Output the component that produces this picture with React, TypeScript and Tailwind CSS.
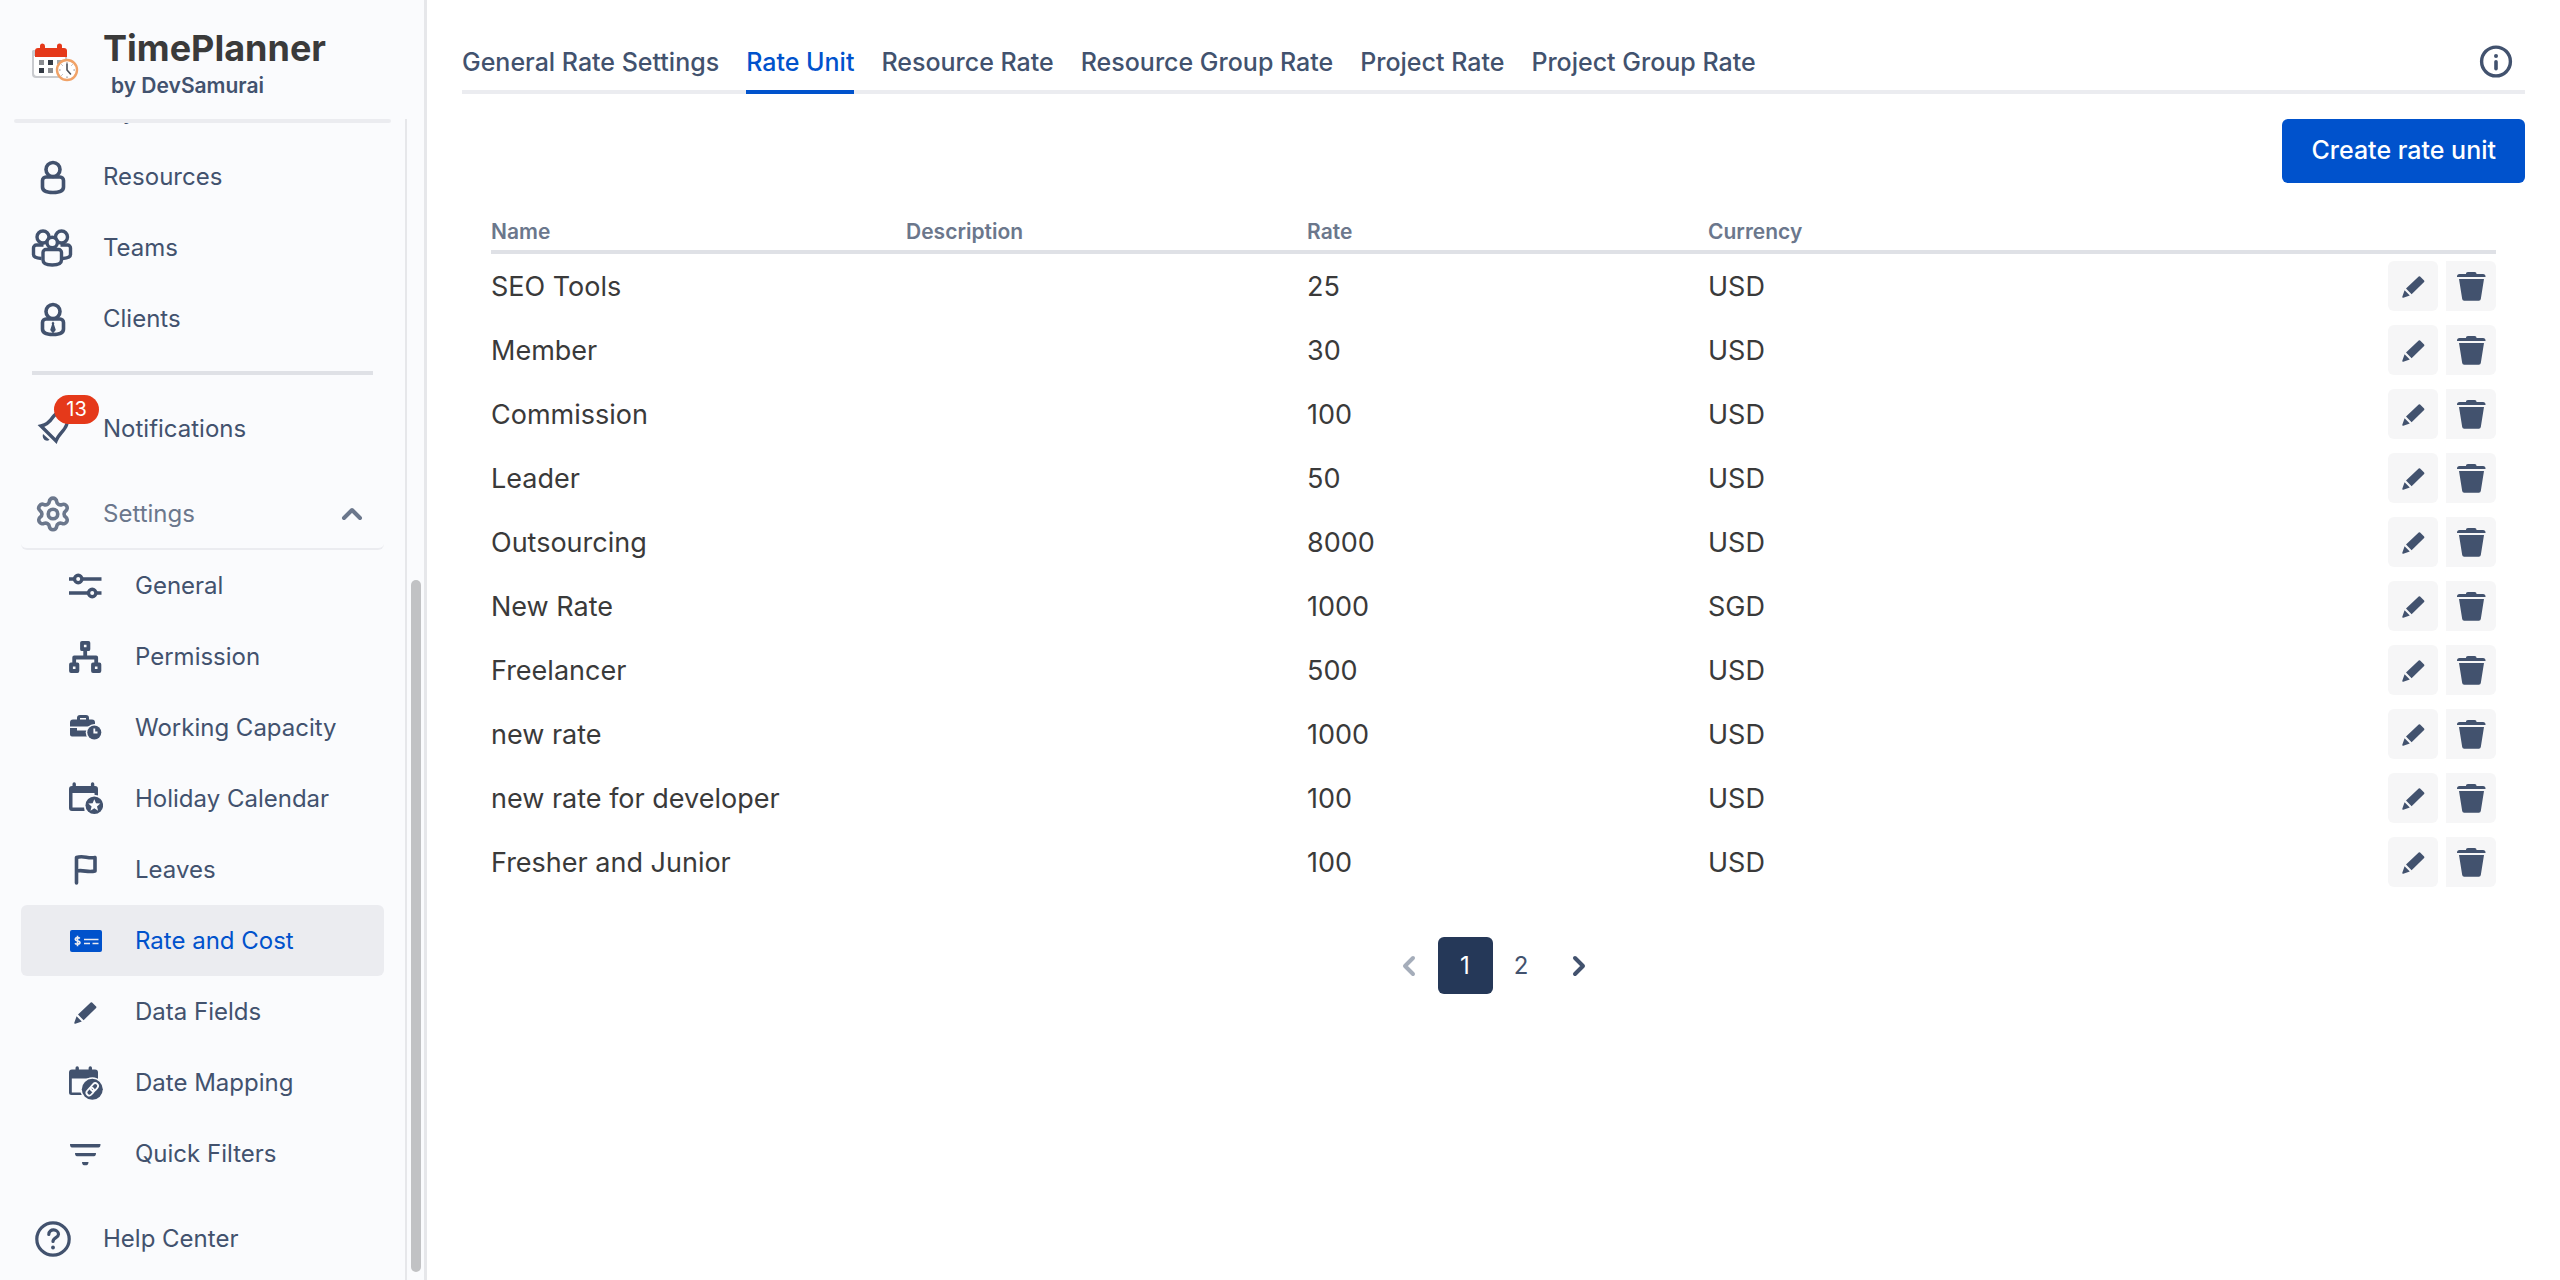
import type { ReactNode } from "react";
import { Settings } from "lucide-react";

const ROWS = [
  { name: "SEO Tools", rate: "25", currency: "USD" },
  { name: "Member", rate: "30", currency: "USD" },
  { name: "Commission", rate: "100", currency: "USD" },
  { name: "Leader", rate: "50", currency: "USD" },
  { name: "Outsourcing", rate: "8000", currency: "USD" },
  { name: "New Rate", rate: "1000", currency: "SGD" },
  { name: "Freelancer", rate: "500", currency: "USD" },
  { name: "new rate", rate: "1000", currency: "USD" },
  { name: "new rate for developer", rate: "100", currency: "USD" },
  { name: "Fresher and Junior", rate: "100", currency: "USD" },
];

const TABS = [
  "General Rate Settings",
  "Rate Unit",
  "Resource Rate",
  "Resource Group Rate",
  "Project Rate",
  "Project Group Rate",
];

function LogoIcon() {
  return (
    <svg viewBox="0 0 50 42" className="w-[50px] h-[42px]">
      <path d="M2 8h34v24a4 4 0 0 1-4 4H5a4 4 0 0 1-4-4V9z" fill="#c9cbcf" />
      <path d="M3 14h31v17a3 3 0 0 1-3 3H6a3 3 0 0 1-3-3z" fill="#fff" />
      <path d="M4 15V9a3 3 0 0 1 3-3h2V4a2.5 2.5 0 0 1 5 0v2h12V4a2.5 2.5 0 0 1 5 0v2h2a3 3 0 0 1 3 3v6z" fill="#e5391a" />
      <path d="M8 18h5v5H8zM17 26h5v5h-5z" fill="#8a8c90" />
      <path d="M17 18h5v5h-5zM8 26h5v5H8z" fill="#333a44" />
      <path d="M26 18h6v4h-6z" fill="#a5a7aa" />
      <circle cx="36" cy="28" r="10" fill="#fff" stroke="#f0a267" strokeWidth="2.4" />
      <path d="M36 20v1.6M36 34.4V36M28 28h1.6M42.4 28H44M30.5 22.5l1 1M41.5 22.5l-1 1M30.5 33.5l1-1" stroke="#8a8c90" strokeWidth="1" />
      <path d="M36 22v6l3.5 4" fill="none" stroke="#4a4f57" strokeWidth="1.6" strokeLinecap="round" />
    </svg>
  );
}

function PersonIcon({ tie }: { tie?: boolean }) {
  return (
    <svg viewBox="0 0 40 40" className="w-10 h-10" fill="none" stroke="currentColor" strokeWidth="3.6">
      <circle cx="21" cy="12.5" r="7" />
      <path d="M14 20h14a3.5 3.5 0 0 1 3.5 3.5V30c0 3.8-4 5.500-10.500 5.500S10.500 33.800 10.500 30v-6.500A3.500 3.500 0 0 1 14 20z" />
      {tie && <path d="M21 22.500l1.300 1.500-.3 1.500 1.800 5.500-2.800 3.500-2.800-3.500 1.800-5.500-.3-1.500z" fill="currentColor" stroke="none" />}
    </svg>
  );
}

function TeamsIcon() {
  return (
    <svg viewBox="0 0 44 44" className="w-11 h-11" fill="none" stroke="currentColor" strokeWidth="3.4">
      <circle cx="13" cy="11" r="6" />
      <circle cx="31.500" cy="11" r="6" />
      <path d="M11.500 32.500c-5-.3-8-1.500-8-4V22a3 3 0 0 1 3-3h7M32.500 32.500c5-.3 8-1.500 8-4V22a3 3 0 0 0-3-3h-7" />
      <circle cx="22.200" cy="16.500" r="5.200" fill="#fafbfd" />
      <path d="M16 23.500h12.500a3 3 0 0 1 3 3V34c0 3.500-3.500 5-9.300 5S13 37.500 13 34v-7.500a3 3 0 0 1 3-3z" fill="#fafbfd" />
    </svg>
  );
}

function BellIcon() {
  return (
    <svg viewBox="0 0 40 40" className="w-10 h-10" fill="none" stroke="currentColor" strokeWidth="3.4">
      <path d="M9 17c6-1.200 9-4.500 12-9 3-4.500 9-5 12-1s3 6 1.500 9c-2 6-8 9-10.500 16z" />
      <path d="M11 25l6.500 5.800c-3 2.500-8-.5-6.500-5.800z" fill="currentColor" stroke="none" />
    </svg>
  );
}

function SlidersIcon() {
  return (
    <svg viewBox="0 0 36 36" className="w-9 h-9" fill="none" stroke="currentColor" strokeWidth="3.4">
      <path d="M2 11h5.500M15 11h19.500M2 25h19.500M29 25h5.500" />
      <circle cx="11.200" cy="11" r="3.700" />
      <circle cx="25.200" cy="25" r="3.700" />
    </svg>
  );
}

function PermissionIcon() {
  return (
    <svg viewBox="0 0 36 36" className="w-9 h-9" fill="none" stroke="currentColor" strokeWidth="3.8" strokeLinejoin="round">
      <path d="M15 3.800h6.400v6.400H15zM4 25.500h6.400V32H4zM26 25.500h6.400V32H26z" />
      <path d="M18.200 11v7.500M7.200 25v-6.500h22V25" />
    </svg>
  );
}

function BriefcaseClockIcon() {
  return (
    <svg viewBox="0 0 36 36" className="w-9 h-9" fill="currentColor">
      <path d="M10 9.500V8a3 3 0 0 1 3-3h6a3 3 0 0 1 3 3v1.500h3a3 3 0 0 1 3 3v4H3v-4a3 3 0 0 1 3-3zm3 0h6V8h-6z" fillRule="evenodd" />
      <path d="M3 18h7v2.500h10v6H5a2 2 0 0 1-2-2z" />
      <circle cx="27.300" cy="22.500" r="8.600" fill="#fafbfd" />
      <circle cx="27.300" cy="22.500" r="7" />
      <path d="M27.300 18.500v4h3.200" fill="none" stroke="#fafbfd" strokeWidth="1.8" />
    </svg>
  );
}

function HolidayIcon() {
  return (
    <svg viewBox="0 0 36 36" className="w-9 h-9" fill="currentColor">
      <path d="M5.500 5V3a1.700 1.700 0 0 1 3.400 0v2h15V3a1.700 1.700 0 0 1 3.400 0v2h.7a3 3 0 0 1 3 3v7h-3.500v-3h-22v14.500h12V30H5a3 3 0 0 1-3-3V8a3 3 0 0 1 3-3z" />
      <circle cx="27.300" cy="24.300" r="10.500" fill="#fafbfd" />
      <circle cx="27.300" cy="24.300" r="8.800" />
      <path d="M27.300 18.300l1.700 4 4.300.3-3.300 2.800 1.100 4.300-3.800-2.400-3.800 2.400 1.100-4.300-3.300-2.800 4.300-.3z" fill="#fafbfd" />
    </svg>
  );
}

function DateMappingIcon() {
  return (
    <svg viewBox="0 0 36 36" className="w-9 h-9" fill="currentColor">
      <path d="M5 4.500h3.500V3a1.700 1.700 0 0 1 3.400 0v1.500h9.700V3A1.700 1.700 0 0 1 25 3v1.500h3a3 3 0 0 1 3 3V15h-2.500v-1.500H4.800v14H16V30H4.500A2.500 2.500 0 0 1 2 27.500v-20a3 3 0 0 1 3-3z" />
      <circle cx="25.300" cy="24.300" r="12" fill="#fafbfd" />
      <circle cx="25.300" cy="24.300" r="10.500" />
      <g fill="none" stroke="#fafbfd" strokeWidth="1.8" transform="rotate(-48 25.300 24.300)">
        <rect x="18" y="21.500" width="8.500" height="5.600" rx="2.800" />
        <rect x="24" y="21.500" width="8.500" height="5.600" rx="2.800" />
      </g>
    </svg>
  );
}

function FlagIcon() {
  return (
    <svg viewBox="0 0 36 36" className="w-9 h-9" fill="none" stroke="currentColor" strokeWidth="3.6" strokeLinecap="round" strokeLinejoin="round">
      <path d="M9.500 31V5.500C16.500 3 20.500 7 28 5.500V19c-7.500 2-11-1.500-18.500 0" />
    </svg>
  );
}

function RateIcon() {
  return (
    <svg viewBox="0 0 36 36" className="w-9 h-9">
      <rect x="3" y="7" width="32" height="22" rx="2" fill="currentColor" />
      <g fill="none" stroke="#ebecf0">
        <path d="M17 16.500h14.500M17 20.500h6M25.500 20.500h6" strokeWidth="1.7" />
        <path d="M12.800 15.500c-.8-1.200-4.600-1.300-4.600.7 0 2.200 4.800 1.100 4.800 3.400 0 2-4 2-5 .6M10.500 12.800v10.400" strokeWidth="1.6" />
      </g>
    </svg>
  );
}

function PencilIcon() {
  return (
    <svg viewBox="0 0 36 36" className="w-9 h-9" fill="currentColor">
      <path d="M23.700 8.500a1 1 0 0 1 1.400 0l4 4a1 1 0 0 1 0 1.400L16.600 26.200l-5.600-5.600z" />
      <path d="M9.600 22.200l5.200 5.200-6.500 2.400a.8.8 0 0 1-1-1z" />
    </svg>
  );
}

function FilterIcon() {
  return (
    <svg viewBox="0 0 36 36" className="w-9 h-9" fill="currentColor">
      <path d="M3 8h30.500c0 2-.5 3.500-2 3.500H5C3.500 11.500 3 10 3 8zM8 17h21c0 2-.5 3.200-2 3.200H10c-1.500 0-2-1.200-2-3.200zM15 26h6.500c0 2-.8 3.200-2 3.200H17c-1.200 0-2-1.200-2-3.200z" />
    </svg>
  );
}

function HelpIcon() {
  return (
    <svg viewBox="0 0 40 40" className="w-10 h-10" fill="none" stroke="currentColor" strokeWidth="3.2" strokeLinecap="round">
      <circle cx="21" cy="20" r="16.200" />
      <path d="M16.800 15.500c0-6.500 9.700-5.500 9.700-.3 0 3.500-5.500 3.300-5.500 7.300" />
      <circle cx="21" cy="28.500" r="1.900" fill="currentColor" stroke="none" />
    </svg>
  );
}

function InfoIcon() {
  return (
    <svg viewBox="0 0 36 36" className="w-9 h-9" fill="none" stroke="currentColor">
      <circle cx="18" cy="17.500" r="14.400" strokeWidth="3.4" />
      <path d="M18 17.700v7" strokeWidth="3.6" strokeLinecap="round" />
      <circle cx="18" cy="12.100" r="2" fill="currentColor" stroke="none" />
    </svg>
  );
}

function TrashIcon() {
  return (
    <svg viewBox="0 0 36 36" className="w-9 h-9" fill="currentColor">
      <path d="M4 8.500A2.500 2.500 0 0 1 6.500 6H13c0-1.200.5-2 2-2h6.500c1.500 0 2 .8 2 2H30a2.500 2.500 0 0 1 2.500 2.500V9H4z" />
      <path d="M6 11h25l-3.200 20a2 2 0 0 1-2 1.700H11.200a2 2 0 0 1-2-1.700z" />
    </svg>
  );
}

function Chevron({ d }: { d: string }) {
  return (
    <svg viewBox="0 0 24 24" className="w-6 h-6" fill="none" stroke="currentColor" strokeWidth="4" strokeLinecap="round" strokeLinejoin="round">
      <path d={d} />
    </svg>
  );
}

function NavItem({ icon, label }: { icon: ReactNode; label: string }) {
  return (
    <a href="#" className="flex items-center h-[71px] text-2xl text-[#42526e]">
      <span className="flex justify-center w-[62px] mr-5">{icon}</span>
      {label}
    </a>
  );
}

function SubItem({ icon, label, active }: { icon: ReactNode; label: string; active?: boolean }) {
  return (
    <a
      href="#"
      className={
        active
          ? "flex items-center h-[71px] rounded-md text-2xl text-[#0052cc] bg-[#ebecf0]"
          : "flex items-center h-[71px] rounded-md text-2xl text-[#42526e]"
      }
    >
      <span className="flex justify-center w-9 ml-[46px] mr-8">{icon}</span>
      {label}
    </a>
  );
}

function Sidebar() {
  return (
    <aside className="flex flex-col w-[427px] shrink-0 h-full bg-[#fafbfd] border-r-[3px] border-[#e6e7ea]">
      <div className="flex h-[119px] shrink-0 pl-[31px] pt-6">
        <div className="w-[72px] pt-[18px]">
          <LogoIcon />
        </div>
        <div>
          <div className="text-4xl leading-12 font-bold text-[#3a3a3a]">TimePlanner</div>
          <div className="pl-2 text-[21px] leading-7 font-semibold text-[#42526e]">by DevSamurai</div>
        </div>
      </div>
      <div className="flex flex-1 min-h-0">
        <nav className="flex-1 min-w-0 overflow-hidden">
          <div className="h-1 mx-3.5 rounded-full bg-[#ebecf0]" />
          <div className="px-[21px]">
            {/* previous item, scrolled under the header */}
            <div className="h-[18px] overflow-hidden">
              <a href="#" className="block -mt-7 pl-20 text-2xl leading-8 text-[#42526e]">My</a>
            </div>
            <NavItem icon={<PersonIcon />} label="Resources" />
            <NavItem icon={<TeamsIcon />} label="Teams" />
            <NavItem icon={<PersonIcon tie />} label="Clients" />
            <div className="h-1 mx-[11px] mt-[17px] mb-[18px] bg-[#dfe1e6]" />
            <a href="#" className="flex items-center h-[71px] text-2xl text-[#42526e]">
              <span className="relative flex justify-center w-[62px] mr-5">
                <BellIcon />
                <span className="absolute left-[33px] -top-3.5 flex items-center justify-center w-[45px] h-[29px] rounded-full bg-[#e5391a] text-xl text-white">
                  13
                </span>
              </span>
              Notifications
            </a>
            <button type="button" className="flex items-center w-full h-[86px] pt-4 border-b-2 border-[#ebecf0] rounded-md text-2xl text-[#6b778c]">
              <span className="flex justify-center w-16 mr-[18px]">
                <Settings className="w-[38px] h-[38px]" strokeWidth={2.3} />
              </span>
              Settings
              <span className="ml-auto mr-5">
                <Chevron d="M4 16l8-8 8 8" />
              </span>
            </button>
            <SubItem icon={<SlidersIcon />} label="General" />
            <SubItem icon={<PermissionIcon />} label="Permission" />
            <SubItem icon={<BriefcaseClockIcon />} label="Working Capacity" />
            <SubItem icon={<HolidayIcon />} label="Holiday Calendar" />
            <SubItem icon={<FlagIcon />} label="Leaves" />
            <SubItem icon={<RateIcon />} label="Rate and Cost" active />
            <SubItem icon={<PencilIcon />} label="Data Fields" />
            <SubItem icon={<DateMappingIcon />} label="Date Mapping" />
            <SubItem icon={<FilterIcon />} label="Quick Filters" />
            <div className="h-3.5" />
            <NavItem icon={<HelpIcon />} label="Help Center" />
          </div>
        </nav>
        <div className="flex flex-col items-center w-[19px] pb-2 border-l-2 border-[#e6e7ea]">
          <div className="mt-auto w-2.5 h-[60%] rounded-full bg-[#c1c2c4]" />
        </div>
      </div>
    </aside>
  );
}

function Tabs() {
  return (
    <div className="flex justify-between border-b-4 border-[#ebecf0]">
      <div className="flex gap-[27px]">
        {TABS.map((tab) => (
          <a
            key={tab}
            href="#"
            className={
              tab === "Rate Unit"
                ? "-mb-1 py-3 border-b-4 border-[#0052cc] text-[25px] leading-8 font-medium text-[#0052cc]"
                : "py-3 text-[25px] leading-8 font-medium text-[#42526e]"
            }
          >
            {tab}
          </a>
        ))}
      </div>
      <button type="button" aria-label="Info" className="mr-[11px] text-[#42526e]">
        <InfoIcon />
      </button>
    </div>
  );
}

function RateTable() {
  return (
    <table className="w-full table-fixed border-separate border-spacing-0 text-left">
      <thead>
        <tr className="text-[21px] leading-7 text-[#6b778c]">
          <th className="w-[20.7%] pb-1 border-b-4 border-[#dfe1e6] font-semibold">Name</th>
          <th className="w-[20%] pb-1 border-b-4 border-[#dfe1e6] font-semibold">Description</th>
          <th className="w-[20%] pb-1 border-b-4 border-[#dfe1e6] font-semibold">Rate</th>
          <th className="pb-1 border-b-4 border-[#dfe1e6] font-semibold">Currency</th>
          <th className="w-[20%] border-b-4 border-[#dfe1e6]" aria-label="Actions" />
        </tr>
      </thead>
      <tbody>
        {ROWS.map((row) => (
          <tr key={row.name} className="h-16 text-[27px] text-[#3a3a3a]">
            <td className="pt-0.5">{row.name}</td>
            <td />
            <td className="pt-0.5">{row.rate}</td>
            <td className="pt-0.5">{row.currency}</td>
            <td>
              <div className="flex justify-end gap-2 text-[#42526e]">
                <button type="button" aria-label={`Edit ${row.name}`} className="flex items-center justify-center size-[50px] rounded-md bg-[#f6f6f7]">
                  <PencilIcon />
                </button>
                <button type="button" aria-label={`Delete ${row.name}`} className="flex items-center justify-center size-[50px] rounded-r-md bg-[#f6f6f7]">
                  <TrashIcon />
                </button>
              </div>
            </td>
          </tr>
        ))}
      </tbody>
    </table>
  );
}

function Pagination() {
  return (
    <div className="flex justify-center items-center mt-[43px] text-2xl text-[#42526e]">
      <button type="button" aria-label="Previous page" disabled className="flex justify-center w-14 text-[#a5adba]">
        <Chevron d="M15 4l-8 8 8 8" />
      </button>
      <button type="button" className="w-[55px] h-[57px] rounded-md bg-[#253858] text-white">1</button>
      <button type="button" className="w-[57px] h-[57px] rounded-md">2</button>
      <button type="button" aria-label="Next page" className="flex justify-center w-14">
        <Chevron d="M9 4l8 8-8 8" />
      </button>
    </div>
  );
}

export default function App() {
  return (
    <div className="flex h-screen overflow-hidden bg-white font-['Inter',sans-serif]">
      <Sidebar />
      <main className="flex-1 min-w-0 px-[35px] pt-[34px]">
        <Tabs />
        <div className="flex justify-end mt-[25px]">
          <button type="button" className="h-16 px-[29px] rounded-md bg-[#0052cc] text-[25px] font-medium text-white">
            Create rate unit
          </button>
        </div>
        <div className="px-[29px] pt-[35px]">
          <RateTable />
          <Pagination />
        </div>
      </main>
    </div>
  );
}
